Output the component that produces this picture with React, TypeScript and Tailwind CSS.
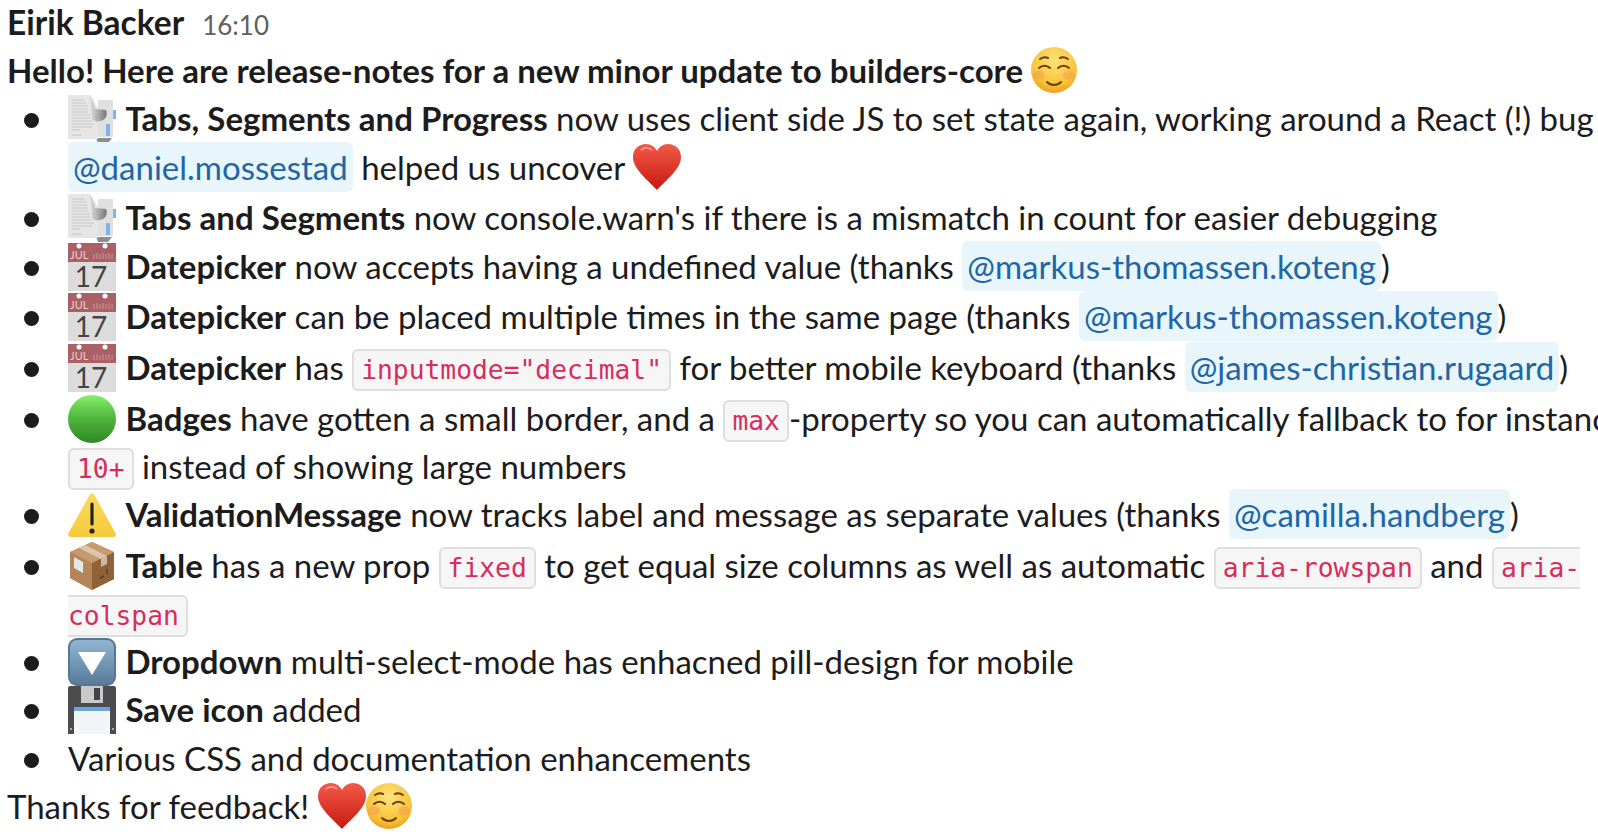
const lato = "font-['Lato','Liberation_Sans',sans-serif]";

function Doc() {
  return (
    <svg viewBox="0 0 48 48" className="inline-block w-[48px] h-[48px] -my-[24px] mr-[1px] align-[12px]">
      <defs>
        <linearGradient id="fold" x1="0" y1="0" x2="1" y2="0">
          <stop offset="0" stopColor="#ddd" />
          <stop offset="1" stopColor="#777" />
        </linearGradient>
      </defs>
      <rect x="30" y="5" width="15" height="37" fill="#e0e0e0" />
      <path d="M28 43h16l-4 5H30z" fill="#8e8e8e" />
      <path d="M0 0h22l8 13v31H0z" fill="#e6e6e6" />
      <path d="M22 0c3 5 4 9 5 14l11 1c2 5 0 10-6 11-4 1-6 0-8-2z" fill="url(#fold)" />
      <path d="M4 5h12M4 8h14M4 11h16M4 14h16M4 17h16M4 20h18M4 23h18M4 26h20M4 29h22M4 32h20M4 35h8M4 40h10" stroke="#c6c6c6" strokeWidth="1" />
      <rect x="45" y="15" width="3" height="9" fill="#7db4ee" />
      <rect x="38" y="29" width="4" height="12" fill="#7db4ee" />
    </svg>
  );
}

function Cal() {
  return (
    <svg viewBox="0 0 48 48" className="inline-block w-[48px] h-[48px] -my-[24px] mr-[1px] align-[12px] overflow-visible">
      <rect y="0" width="48" height="48" fill="#dcdcdc" />
      <rect y="0" width="48" height="19" fill="#aa6065" />
      <circle cx="11" cy="3" r="2.5" fill="#fff" />
      <circle cx="37" cy="3" r="2.5" fill="#fff" />
      <text x="2" y="16" fontSize="11" fill="#e8d0d0" fontFamily="Lato, sans-serif">JUL</text>
      <path d="M26 16v-5M29 16v-6M32 16v-5M35 16v-6M38 16v-5M41 16v-6M44 16v-5" stroke="#c99" strokeWidth="1" />
      <text x="23" y="44" textAnchor="middle" fontSize="28" fill="#444" fontFamily="Lato, sans-serif">17</text>
    </svg>
  );
}

function Heart() {
  return (
    <svg viewBox="0 0 48 46" className="inline-block w-[48px] h-[46px] -my-[23px] align-[13px]">
      <defs>
        <linearGradient id="hrt" x1="0" y1="0" x2="0" y2="1">
          <stop offset="0" stopColor="#f25a4a" />
          <stop offset="1" stopColor="#c8180f" />
        </linearGradient>
      </defs>
      <path d="M24 46C14 35 0 25 0 13 0 5 6 0 13 0c5 0 9 3 11 7 2-4 6-7 11-7 7 0 13 5 13 13 0 12-14 22-24 33z" fill="url(#hrt)" />
      <path d="M8 6c3-3 8-3 11 0" stroke="#fbb" strokeWidth="2" fill="none" opacity="0.6" />
    </svg>
  );
}

function Smile() {
  return (
    <svg viewBox="0 0 46 46" className="inline-block w-[46px] h-[46px] -my-[23px] align-[13px]">
      <defs>
        <radialGradient id="face" cx="0.5" cy="0.3" r="0.75">
          <stop offset="0" stopColor="#fde27a" />
          <stop offset="0.7" stopColor="#f8c236" />
          <stop offset="1" stopColor="#ea961a" />
        </radialGradient>
      </defs>
      <circle cx="23" cy="23" r="23" fill="url(#face)" />
      <ellipse cx="8" cy="28" rx="6" ry="4.5" fill="#f28a5a" opacity="0.35" />
      <ellipse cx="38" cy="28" rx="6" ry="4.5" fill="#f28a5a" opacity="0.35" />
      <path d="M8 21c3-3 8-3 11 0M27 21c3-3 8-3 11 0M9 12c3-2 6-2 8-1M29 11c2-1 5-1 8 1M16 35c4 4 10 4 14 0" stroke="#6b3f14" strokeWidth="2" fill="none" strokeLinecap="round" />
    </svg>
  );
}

function Green() {
  return (
    <svg viewBox="0 0 48 48" className="inline-block w-[48px] h-[48px] -my-[24px] mr-[1px] align-[12px]">
      <defs>
        <linearGradient id="grn" x1="0" y1="0" x2="0" y2="1">
          <stop offset="0" stopColor="#86f06c" />
          <stop offset="0.5" stopColor="#4db33a" />
          <stop offset="1" stopColor="#2f8a26" />
        </linearGradient>
      </defs>
      <circle cx="24" cy="24" r="24" fill="url(#grn)" />
    </svg>
  );
}

function Warning() {
  return (
    <svg viewBox="0 0 48 44" className="inline-block w-[48px] h-[44px] -my-[22px] mr-[1px] align-[12px]">
      <defs>
        <linearGradient id="wrn" x1="0" y1="0" x2="0" y2="1">
          <stop offset="0" stopColor="#fbdc5e" />
          <stop offset="1" stopColor="#f6c93c" />
        </linearGradient>
      </defs>
      <path d="M24 0c1 0 2 1 3 3l21 38c0 2-1 3-3 3H3c-2 0-3-1-3-3L21 3c1-2 2-3 3-3z" fill="url(#wrn)" />
      <path d="M24 11v20" stroke="#222" strokeWidth="3.2" strokeLinecap="round" />
      <circle cx="24" cy="38" r="2.6" fill="#222" />
    </svg>
  );
}

function Box() {
  return (
    <svg viewBox="0 0 48 48" className="inline-block w-[48px] h-[48px] -my-[24px] mr-[1px] align-[12px]">
      <path d="M24 0l22 10v27L24 48 2 36V10z" fill="#b98a58" />
      <path d="M2 10l22 11v27L2 36z" fill="#b5855a" />
      <path d="M46 10L24 21v27l22-11z" fill="#8f6238" />
      <path d="M2 10L24 0l22 10-22 11z" fill="#c69a6c" />
      <path d="M11 6l22 11 6-3L17 3z" fill="#d8c8b0" />
      <path d="M33 17l6-3v8l-6 3z" fill="#c8bba6" />
      <path d="M6 15l9 5v11l-9-5z" fill="#e6e6e6" />
      <path d="M32 36l4-2M39 32v-5" stroke="#5c3d20" strokeWidth="1.5" />
    </svg>
  );
}

function Down() {
  return (
    <svg viewBox="0 0 48 48" className="inline-block w-[48px] h-[48px] -my-[24px] mr-[1px] align-[12px]">
      <defs>
        <linearGradient id="dwn" x1="0" y1="0" x2="0" y2="1">
          <stop offset="0" stopColor="#92b4d2" />
          <stop offset="1" stopColor="#5a7c9c" />
        </linearGradient>
      </defs>
      <rect width="48" height="48" rx="9" fill="#557793" />
      <rect x="2" y="2" width="44" height="44" rx="7" fill="url(#dwn)" />
      <path d="M10 14h28L24 37z" fill="#fff" />
    </svg>
  );
}

function Save() {
  return (
    <svg viewBox="0 0 48 48" className="inline-block w-[48px] h-[48px] -my-[24px] mr-[1px] align-[12px]">
      <path d="M0 2a2 2 0 0 1 2-2h44a2 2 0 0 1 2 2v46H0z" fill="#4c4c4e" />
      <rect x="13" y="0" width="22" height="17" fill="#c9c9c9" />
      <rect x="26" y="2" width="6" height="12" fill="#444" />
      <rect x="6" y="21" width="36" height="27" fill="#f3f4f6" />
      <rect x="6" y="21" width="36" height="4" fill="#6ba3dc" />
      <circle cx="3" cy="43" r="1" fill="#ccc" />
      <circle cx="45" cy="43" r="1" fill="#ccc" />
    </svg>
  );
}

const Mention = ({ children }: { children: string }) => (
  <span className="bg-[#e8f5fa] text-[#1e66a6] rounded-[6px] px-[5px] py-[5px]">{children}</span>
);

const Code = ({ children, className = "rounded-[6px] border-2 px-[7px]" }: { children: string; className?: string }) => (
  <span className={`font-['DejaVu_Sans_Mono',monospace] text-[26.3px] text-[#d62d5c] bg-[#f6f6f6] border-[#dedede] py-[4px] align-[1px] ${className}`}>
    {children}
  </span>
);

const Item = ({ h, bullet, children }: { h: string; bullet?: boolean; children: React.ReactNode }) => (
  <div className={`relative pl-[68px] leading-[48px] whitespace-nowrap ${h}`}>
    {bullet && <span className="absolute left-[24px] top-[19px] w-[15px] h-[15px] rounded-full bg-[#1d1c1d]" />}
    {children}
  </div>
);

export default function App() {
  return (
    <div className={`${lato} w-[1598px] h-[834px] overflow-hidden bg-white text-[#1d1c1d] text-[33px] pl-[7px]`}>
      <div className="-mt-[2px] h-[48px] leading-[48px] whitespace-nowrap">
        <b className="font-bold text-[33.5px]">Eirik Backer</b>
        <span className="ml-[18px] text-[26px] text-[#616061]">16:10</span>
      </div>
      <div className="h-[48px] leading-[48px] whitespace-nowrap font-bold">
        Hello! Here are release-notes for a new minor update to builders-core <Smile />
      </div>

      <div className="-ml-[7px]">
        <Item h="h-[49px]" bullet>
          <Doc /> <b>Tabs, Segments and Progress</b> now uses client side JS to set state again, working around a React (!) bug
        </Item>
        <Item h="h-[50px]">
          <Mention>@daniel.mossestad</Mention> helped us uncover <Heart />
        </Item>
        <Item h="h-[49px]" bullet>
          <Doc /> <b>Tabs and Segments</b> now console.warn's if there is a mismatch in count for easier debugging
        </Item>
        <Item h="h-[50px]" bullet>
          <Cal /> <b>Datepicker</b> now accepts having a undefined value (thanks <Mention>@markus-thomassen.koteng</Mention>)
        </Item>
        <Item h="h-[51px]" bullet>
          <Cal /> <b>Datepicker</b> can be placed multiple times in the same page (thanks <Mention>@markus-thomassen.koteng</Mention>)
        </Item>
        <Item h="h-[51px]" bullet>
          <Cal /> <b>Datepicker</b> has <Code>{'inputmode="decimal"'}</Code> for better mobile keyboard (thanks <Mention>@james-christian.rugaard</Mention>)
        </Item>
        <Item h="h-[48px]" bullet>
          <Green /> <b>Badges</b> have gotten a small border, and a <Code>max</Code>-property so you can automatically fallback to for instance
        </Item>
        <Item h="h-[48px]">
          <Code>10+</Code> instead of showing large numbers
        </Item>
        <Item h="h-[51px]" bullet>
          <Warning /> <b>ValidationMessage</b> now tracks label and message as separate values (thanks <Mention>@camilla.handberg</Mention>)
        </Item>
        <Item h="h-[48px]" bullet>
          <Box /> <b>Table</b> has a new prop <Code>fixed</Code> to get equal size columns as well as automatic <Code>aria-rowspan</Code> and{" "}
          <Code className="rounded-l-[6px] border-2 border-r-0 pl-[7px]">aria-</Code>
        </Item>
        <Item h="h-[48px]">
          <Code className="rounded-r-[6px] border-2 border-l-0 pr-[7px]">colspan</Code>
        </Item>
        <Item h="h-[48px]" bullet>
          <Down /> <b>Dropdown</b> multi-select-mode has enhacned pill-design for mobile
        </Item>
        <Item h="h-[49px]" bullet>
          <Save /> <b>Save icon</b> added
        </Item>
        <Item h="h-[48px]" bullet>
          Various CSS and documentation enhancements
        </Item>
      </div>
      <div className="h-[48px] leading-[48px] whitespace-nowrap">
        Thanks for feedback! <Heart /><Smile />
      </div>
    </div>
  );
}
